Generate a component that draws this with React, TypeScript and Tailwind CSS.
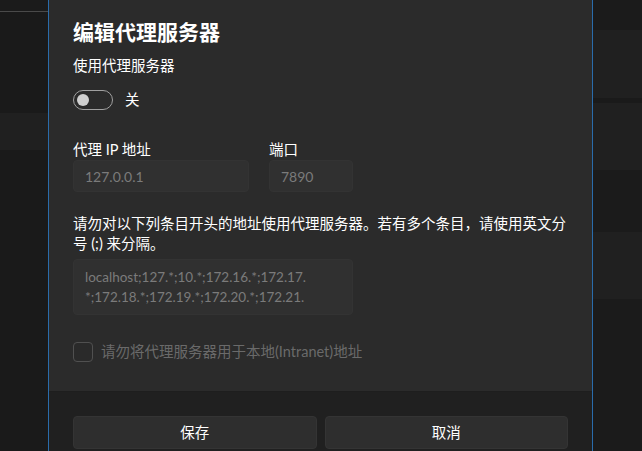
export default function App() {
  return (
    <div className="flex h-[451px] w-[642px] overflow-hidden bg-[#1b1b1b] font-['Lato','Noto_Sans_CJK_SC',sans-serif] text-white">
      {/* backdrop, left */}
      <div className="flex w-[48px] shrink-0 flex-col">
        <div className="h-[11px] bg-[#1b1b1b]" />
        <div className="h-px bg-[#4a4a4a]" />
        <div className="h-[101px] bg-[#1a1a1a]" />
        <div className="h-[37px] bg-[#202020]" />
        <div className="flex-1 bg-[#1a1a1a]" />
      </div>

      {/* dialog */}
      <div className="flex w-[545px] shrink-0 flex-col border-x border-[#2a6cab]">
        <div className="flex flex-1 flex-col bg-[#2b2b2b] px-6">
          <h1 className="pt-[18px] text-[21px] font-semibold leading-[28px]">编辑代理服务器</h1>
          <p className="mt-[10px] text-[14.5px] leading-5">使用代理服务器</p>

          <div className="mt-[14px] flex items-center gap-3">
            <div className="flex h-5 w-10 items-center rounded-full border border-[#a0a0a0] px-[3px]">
              <div className="h-3 w-3 rounded-full bg-[#d0d0d0]" />
            </div>
            <span className="text-[14.5px] leading-5">关</span>
          </div>

          <div className="mt-[30px] flex gap-5">
            <div className="flex flex-col">
              <label className="text-[14.5px] leading-5">代理 IP 地址</label>
              <div className="flex h-8 w-[176px] items-center rounded-[4px] border border-[#333333] bg-[#303030] px-[11px] text-[14px] text-[#7b7b7b]">
                127.0.0.1
              </div>
            </div>
            <div className="flex flex-col">
              <label className="text-[14.5px] leading-5">端口</label>
              <div className="flex h-8 w-[84px] items-center rounded-[4px] border border-[#333333] bg-[#303030] px-[11px] text-[14px] text-[#7b7b7b]">
                7890
              </div>
            </div>
          </div>

          <p className="mt-[22px] text-[14.5px] leading-5">
            请勿对以下列条目开头的地址使用代理服务器。若有多个条目，请使用英文分
            <br />
            号 (;) 来分隔。
          </p>

          <div className="mt-[5px] flex h-14 w-[280px] flex-col justify-center rounded-[4px] border border-[#333333] bg-[#303030] px-[11px] text-[13.5px] leading-5 text-[#7b7b7b]">
            <span className="whitespace-pre">localhost;127.*;10.*;172.16.*;172.17.</span>
            <span className="whitespace-pre">*;172.18.*;172.19.*;172.20.*;172.21.</span>
          </div>

          <div className="mt-[27px] flex items-center gap-2">
            <div className="h-5 w-5 rounded-[4px] border border-[#505050] bg-[#2a2a2a]" />
            <span className="text-[14.5px] leading-5 text-[#6a6a6a]">请勿将代理服务器用于本地(Intranet)地址</span>
          </div>
        </div>

        <div className="flex h-[60px] shrink-0 gap-2 border-t border-[#1e1e1e] bg-[#202020] px-6 pt-6">
          <button className="h-[33px] flex-1 rounded-[4px] border border-[#343434] bg-[#2e2e2e] text-[14.5px] text-white">
            保存
          </button>
          <button className="h-[33px] flex-1 rounded-[4px] border border-[#343434] bg-[#2e2e2e] text-[14.5px] text-white">
            取消
          </button>
        </div>
      </div>

      {/* backdrop, right */}
      <div className="flex flex-1 flex-col">
        <div className="h-[30px] bg-[#1b1b1b]" />
        <div className="h-[68px] bg-[#202020]" />
        <div className="h-[5px] bg-[#1a1a1a]" />
        <div className="h-[67px] bg-[#202020]" />
        <div className="h-[62px] bg-[#1b1b1b]" />
        <div className="h-[67px] bg-[#202020]" />
        <div className="flex-1 bg-[#1b1b1b]" />
      </div>
    </div>
  );
}
